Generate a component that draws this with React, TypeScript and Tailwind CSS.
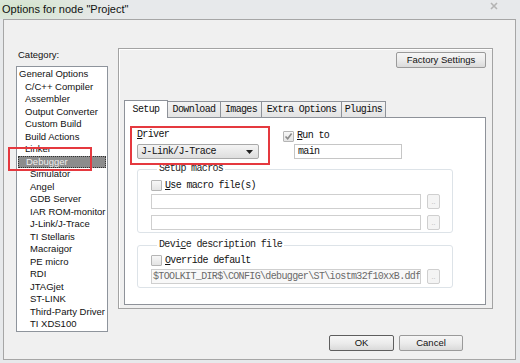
import type { ReactNode } from "react";

const mono = "font-['Liberation_Mono',monospace] text-[10px] tracking-[-0.65px]";

const categories: { label: string; indent: number; selected?: boolean }[] = [
  { label: "General Options", indent: 2 },
  { label: "C/C++ Compiler", indent: 8 },
  { label: "Assembler", indent: 8 },
  { label: "Output Converter", indent: 8 },
  { label: "Custom Build", indent: 8 },
  { label: "Build Actions", indent: 8 },
  { label: "Linker", indent: 8 },
  { label: "Debugger", indent: 8, selected: true },
  { label: "Simulator", indent: 13 },
  { label: "Angel", indent: 13 },
  { label: "GDB Server", indent: 13 },
  { label: "IAR ROM-monitor", indent: 13 },
  { label: "J-Link/J-Trace", indent: 13 },
  { label: "TI Stellaris", indent: 13 },
  { label: "Macraigor", indent: 13 },
  { label: "PE micro", indent: 13 },
  { label: "RDI", indent: 13 },
  { label: "JTAGjet", indent: 13 },
  { label: "ST-LINK", indent: 13 },
  { label: "Third-Party Driver", indent: 13 },
  { label: "TI XDS100", indent: 13 },
];

const tabs = [
  { label: "Setup", w: "w-[44px]" },
  { label: "Download", w: "w-[54px]" },
  { label: "Images", w: "w-[42px]" },
  { label: "Extra Options", w: "w-[81px]" },
  { label: "Plugins", w: "w-[45px]" },
];

function Check({ checked = false }: { checked?: boolean }) {
  return (
    <span className="flex size-[11px] shrink-0 items-center justify-center rounded-[1px] border border-[#b5b5b5] bg-gradient-to-b from-[#f7f7f7] to-[#e4e4e4]">
      {checked && (
        <svg width="9" height="9" viewBox="0 0 9 9">
          <path d="M1.5 4.5 L3.7 6.8 L7.6 1.6" fill="none" stroke="#8a8a8a" strokeWidth="1.6" />
        </svg>
      )}
    </span>
  );
}

function Browse() {
  return (
    <span className="flex h-[15px] w-[13px] items-end justify-center rounded-[2px] border border-[#cfcfcf] bg-[#f4f4f4] pb-[3px] text-[7px] leading-none text-[#b0b0b0]">
      ..
    </span>
  );
}

function Group({ legend, children, className }: { legend: ReactNode; children: ReactNode; className: string }) {
  return (
    <fieldset className={`w-[316px] rounded-[3px] border border-[#dde3e8] pl-[13px] ${className}`}>
      <legend className={`ml-[6px] px-[2px] leading-[12px] text-[#222] ${mono}`}>{legend}</legend>
      {children}
    </fieldset>
  );
}

function WinButton({ children, w, strong = false }: { children: ReactNode; w: string; strong?: boolean }) {
  return (
    <div
      className={`flex h-[16px] ${w} items-center justify-center rounded-[2px] border bg-gradient-to-b from-[#f6f6f6] via-[#ececec] to-[#dadada] text-[9.5px] text-[#111] ${
        strong ? "border-[#5e5e5e]" : "border-[#9a9a9a]"
      }`}
    >
      {children}
    </div>
  );
}

export default function App() {
  return (
    <div className="relative h-[363px] w-[520px] overflow-hidden bg-[#e7e9eb] font-['Liberation_Sans',Arial,sans-serif]">
      {/* title bar */}
      <div className="flex h-[19px] items-center justify-between bg-[radial-gradient(ellipse_90px_22px_at_22px_8px,#d3e4cc,transparent)] pl-[2px] pr-[22px]">
        <span className="text-[11px] text-[#111]">Options for node "Project"</span>
        <svg width="8" height="8" viewBox="0 0 8 8" className="-mt-[8px]">
          <path d="M1 1 L7 7 M7 1 L1 7" stroke="#b4b4b4" strokeWidth="1.6" />
        </svg>
      </div>

      {/* dialog body */}
      <div className="ml-[3px] h-[341px] w-[513px] border border-[#a6a6a6] bg-[#f0f0f0]">
        <div className="flex items-start">
          {/* category column */}
          <div className="ml-[12px] pt-[29px]">
            <div className="pl-[2px] text-[9.5px] leading-[12px] text-[#111]">Category:</div>
            <div className="mt-[5px] h-[266px] w-[92px] border border-[#8e949c] bg-white pt-[1px]">
              {categories.map((c) =>
                c.selected ? (
                  <div
                    key={c.label}
                    className="mx-[1px] border border-dotted border-[#333] bg-[#8c8c8c] text-[9.5px] leading-[10.5px] text-[#eeeeee]"
                    style={{ paddingLeft: c.indent - 1 }}
                  >
                    {c.label}
                  </div>
                ) : (
                  <div
                    key={c.label}
                    className="whitespace-nowrap text-[9.5px] leading-[12.5px] text-[#111]"
                    style={{ paddingLeft: c.indent }}
                  >
                    {c.label}
                  </div>
                ),
              )}
            </div>
          </div>

          {/* options frame */}
          <div className="ml-[10px] mt-[28px] h-[261px] w-[375px] border border-[#a3a3a3] shadow-[inset_1px_1px_0_#ffffff]">
            <div className="flex justify-end pr-[6px] pt-[3px]">
              <WinButton w="w-[90px]">Factory Settings</WinButton>
            </div>

            <div className="ml-[5px] mt-[32px] flex items-end">
              {tabs.map((t, i) => (
                <div
                  key={t.label}
                  className={`flex ${t.w} items-center justify-center border border-b-0 border-[#8e9299] ${mono} text-[#111] ${
                    i === 0
                      ? "relative z-10 -mb-px h-[18px] bg-white"
                      : "-ml-px h-[16px] bg-gradient-to-b from-[#f3f3f3] to-[#e3e3e3]"
                  }`}
                >
                  {t.label}
                </div>
              ))}
            </div>

            {/* Setup page */}
            <div className="ml-[5px] h-[188px] w-[362px] border border-[#8e9299] bg-white pl-[12px] pt-[11px]">
              <div className="flex items-start">
                <div>
                  <div className={`leading-[12px] text-[#111] ${mono}`}>
                    <span className="underline">D</span>river
                  </div>
                  <div className="mt-[3px] flex h-[15px] w-[122px] items-center justify-between rounded-[2px] border border-[#a9a9a9] bg-gradient-to-b from-[#f4f4f4] to-[#dedede] pl-[3px] pr-[5px]">
                    <span className={`${mono} text-[#111]`}>J-Link/J-Trace</span>
                    <svg width="7" height="4" viewBox="0 0 7 4">
                      <path d="M0 0 H7 L3.5 4 Z" fill="#222" />
                    </svg>
                  </div>
                </div>
                <div className="ml-[24px] pt-[1px]">
                  <div className="flex items-center gap-[3px]">
                    <Check checked />
                    <span className={`leading-[12px] text-[#111] ${mono}`}>
                      <span className="underline">R</span>un to
                    </span>
                  </div>
                  <div className={`ml-[11px] mt-[2px] flex h-[15px] w-[108px] items-center border border-[#c6c6c6] bg-white pl-[3px] text-[#111] ${mono}`}>
                    main
                  </div>
                </div>
              </div>

              <Group className="mt-[4px] pb-[2px]" legend={<>Setup macros</>}>
                <div className="mt-[5px] flex items-center gap-[3px]">
                  <Check />
                  <span className={`leading-[11px] text-[#111] ${mono}`}>
                    <span className="underline">U</span>se macro file(s)
                  </span>
                </div>
                <div className="mt-[3px] flex gap-[6px]">
                  <div className="h-[15px] w-[270px] border border-[#cfcfcf] bg-white" />
                  <Browse />
                </div>
                <div className="mt-[6px] flex gap-[6px]">
                  <div className="h-[15px] w-[270px] border border-[#cfcfcf] bg-white" />
                  <Browse />
                </div>
              </Group>

              <Group
                className="mt-[6px] pb-[3px]"
                legend={
                  <>
                    Devi<span className="underline">c</span>e description file
                  </>
                }
              >
                <div className="mt-[4px] flex items-center gap-[3px]">
                  <Check />
                  <span className={`leading-[11px] text-[#111] ${mono}`}>
                    <span className="underline">O</span>verride default
                  </span>
                </div>
                <div className="mt-[3px] flex gap-[6px]">
                  <div className={`flex h-[15px] w-[270px] items-center overflow-hidden whitespace-nowrap border border-[#cfcfcf] bg-[#f8f8f8] pl-[1px] text-[#6a6a6a] ${mono}`}>
                    $TOOLKIT_DIR$\CONFIG\debugger\ST\iostm32f10xxB.ddf
                  </div>
                  <Browse />
                </div>
              </Group>
            </div>
          </div>
        </div>

        {/* OK / Cancel */}
        <div className="mt-[3px] flex justify-end gap-[5px] pr-[52px]">
          <WinButton w="w-[65px]" strong>
            OK
          </WinButton>
          <WinButton w="w-[64px]">Cancel</WinButton>
        </div>
      </div>

      {/* red annotation boxes */}
      <div className="absolute left-[8px] top-[147px] h-[24px] w-[84px] border-2 border-[#e5393f]" />
      <div className="absolute left-[130px] top-[126px] h-[39px] w-[140px] border-2 border-[#e5393f]" />
    </div>
  );
}
